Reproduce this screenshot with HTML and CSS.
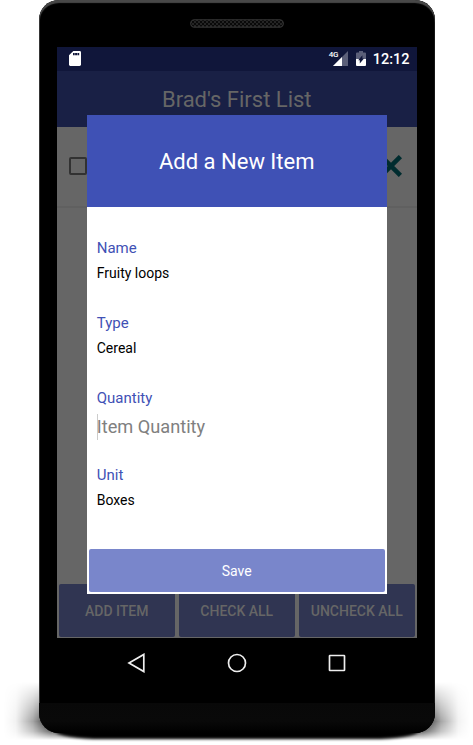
FILE: index.html
```html
<!DOCTYPE html>
<html lang="en">
<head>
<meta charset="utf-8">
<title>Brad's First List</title>
<link rel="stylesheet" href="styles.css">
</head>
<body>
<div class="stage">
  <div class="shadow shadow-wide"></div>
  <div class="shadow shadow-floor"></div>
  <div class="phone">
    <svg class="speaker" viewBox="0 0 94 9" width="94" height="9">
      <defs><pattern id="mesh" width="4" height="4" patternUnits="userSpaceOnUse"><rect width="4" height="4" fill="#242424"/><circle cx="1" cy="1" r="1" fill="#000"/><circle cx="3" cy="3" r="1" fill="#000"/></pattern></defs>
      <rect x=".7" y=".7" width="92.6" height="7.4" rx="3.7" fill="url(#mesh)" stroke="#363636" stroke-width="1.1"/>
    </svg>
    <div class="screen">
      <div class="status">
        <svg class="sd" viewBox="0 0 12 15" width="12" height="15"><path d="M4.3 0H10.6Q12 0 12 1.3V13.6Q12 15 10.6 15H1.3Q0 15 0 13.6V4.3Z" fill="#fff"/><path d="M4 2h1.7v2.2H4zM6.1 2h2v2.2h-2zM8.5 2h1.7v2.2H8.5z" fill="#10163a"/></svg>
        <span class="net">4G</span>
        <svg class="signal" viewBox="0 0 15 15" width="15" height="15"><path d="M15 0V15H0Z" fill="#5b5f79"/><path d="M9 6V15H0Z" fill="#fff"/></svg>
        <svg class="battery" viewBox="0 0 10 15" width="10" height="15"><path d="M3 0H7V1.5H9Q10 1.5 10 2.5V8H0V2.5Q0 1.5 1 1.5H3Z" fill="#5b5f79"/><path d="M0 8H10V14Q10 15 9 15H1Q0 15 0 14Z" fill="#fff"/><path d="M6.4 4.2V7.5H8L3.8 12.6V9.3H2.2Z" fill="#10163a"/></svg>
        <span class="clock">12:12</span>
      </div>
      <div class="appbar">Brad's First List</div>
      <div class="row">
        <span class="box"></span>
        <svg class="cross" viewBox="0 0 22 22" width="22" height="22"><path d="M1.6 1.6 20.4 20.4M20.4 1.6 1.6 20.4" stroke="#002c2f" stroke-width="4.6"/></svg>
      </div>
      <div class="actions">
        <div class="action">ADD ITEM</div>
        <div class="action">CHECK ALL</div>
        <div class="action">UNCHECK ALL</div>
      </div>
      <div class="dialog">
        <div class="dialog-title">Add a New Item</div>
        <div class="form">
          <div class="label">Name</div>
          <div class="value">Fruity loops</div>
          <div class="label">Type</div>
          <div class="value">Cereal</div>
          <div class="label">Quantity</div>
          <div class="input">Item Quantity</div>
          <div class="label">Unit</div>
          <div class="value">Boxes</div>
        </div>
        <div class="save">Save</div>
      </div>
    </div>
    <div class="nav">
      <svg viewBox="0 0 20 20" width="20" height="20"><path d="M16.8 1.4V18.6L2 10Z"/></svg>
      <svg viewBox="0 0 20 20" width="20" height="20"><circle cx="10" cy="10" r="8.5"/></svg>
      <svg viewBox="0 0 20 20" width="20" height="20"><rect x="2.5" y="2.5" width="15" height="15" rx=".5"/></svg>
    </div>
    <div class="chin"></div>
  </div>
</div>
</body>
</html>
```
FILE: styles.css
```css
* { box-sizing: border-box; }
body { margin: 0; background: #fff; font-family: Roboto, "Liberation Sans", sans-serif; }
.stage { position: relative; width: 473px; height: 745px; overflow: hidden; padding-left: 38.5px; }
.shadow { position: absolute; }
.shadow-wide {
  left: 4px; top: 682px; width: 466px; height: 58px;
  background: linear-gradient(90deg, transparent, rgba(0,0,0,.05) 2.5%, rgba(0,0,0,.35) 6.2%, rgba(0,0,0,.85) 10%, #000 13%, #000 87%, rgba(0,0,0,.85) 90%, rgba(0,0,0,.35) 93.8%, rgba(0,0,0,.05) 97.5%, transparent);
  -webkit-mask-image: linear-gradient(transparent, rgba(0,0,0,.35) 25%, #000 68%, rgba(0,0,0,.65) 85%, transparent);
  mask-image: linear-gradient(transparent, rgba(0,0,0,.35) 25%, #000 68%, rgba(0,0,0,.65) 85%, transparent);
}
.shadow-floor { left: 56px; top: 724px; width: 362px; height: 15px; background: #000; border-radius: 50px / 8px; filter: blur(1.5px); }
.phone {
  position: relative; width: 396.5px; height: 733px; background: #000; border-radius: 20px;
  box-shadow: inset 0 3px 1px #484848, inset 1px 0 0 #333, inset -1px 0 0 #111;
  display: flex; flex-direction: column; align-items: center; overflow: hidden;
}
.speaker { flex: none; margin-top: 18.5px; }
.screen { position: relative; flex: none; margin-top: 19px; width: 360px; height: 591.5px; background: #666; display: flex; flex-direction: column; }
.status { height: 24px; background: #10163a; color: #fff; display: flex; align-items: center; padding: 0 8px 0 12px; }
.net { margin-left: auto; align-self: flex-start; margin-top: 4px; font: 500 8px/8px "Roboto", sans-serif; width: 9px; letter-spacing: -.3px; white-space: nowrap; }
.signal { margin-left: -5px; margin-right: 8px; }
.battery { margin-right: 7px; }
.clock { font-size: 14.5px; font-weight: 500; line-height: 17px; margin-top: 1px; width: 36px; white-space: nowrap; }
.appbar { height: 56px; background: #192045; color: #666; font-size: 22px; line-height: 58px; text-align: center; }
.row { height: 81px; border-bottom: 2px solid #606060; display: flex; align-items: center; justify-content: space-between; padding: 0 15px 0 12px; }
.box { width: 18px; height: 18px; border: 2px solid #323232; border-radius: 2px; }
.actions { margin-top: auto; padding: 0 2px 1.5px; display: grid; grid-template-columns: repeat(3, 1fr); gap: 4px; }
.action { height: 53px; border-radius: 2px; background: #303552; color: #666; font-size: 14px; font-weight: 500; line-height: 54px; text-align: center; white-space: nowrap; }
.dialog { position: absolute; left: 30px; top: 68px; width: 300px; height: 479.5px; background: #fff; display: flex; flex-direction: column; }
.dialog-title { height: 92.5px; background: #3f51b5; color: #fff; font-size: 22px; line-height: 94px; text-align: center; }
.form { padding: 30px 10px 0; }
.label { color: #3f51b5; font-size: 15px; line-height: 22px; }
.value { color: #000; font-size: 14px; line-height: 28px; margin-bottom: 25px; }
.input { color: #808080; font-size: 18.2px; line-height: 26px; margin: 5px 0 24px; box-shadow: inset 1px 0 0 #ccc; }
.save { margin: auto 2px 2px; height: 43px; border-radius: 2px; background: #7986cb; color: #fff; font-size: 14px; line-height: 44px; text-align: center; }
.nav { flex: none; height: 49px; width: 220px; display: flex; align-items: center; justify-content: space-between; }
.nav svg { fill: none; stroke: #eee; stroke-width: 1.7; }
.chin { margin-top: 16px; width: 100%; flex: 1; background: linear-gradient(#080808, #090909 60%, #000); }
```
